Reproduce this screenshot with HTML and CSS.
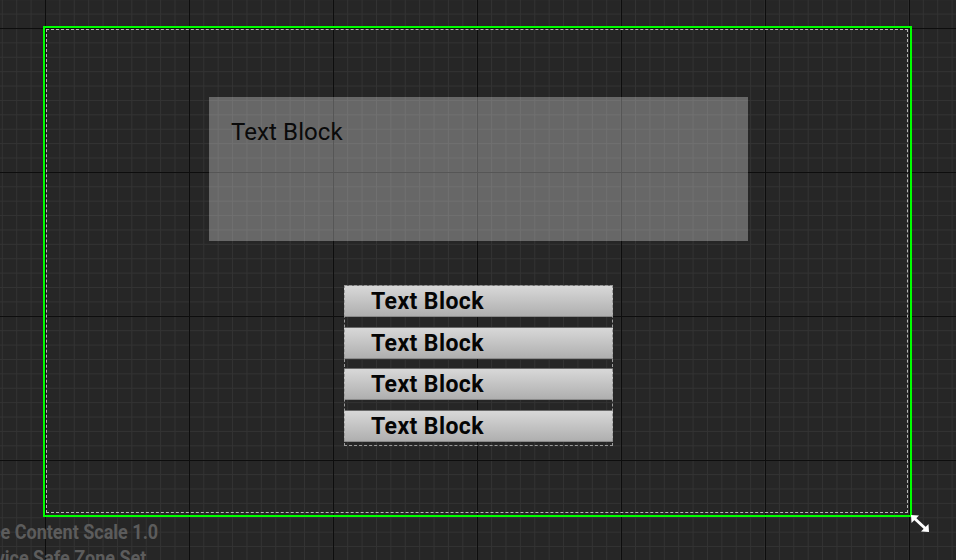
FILE: index.html
```html
<!DOCTYPE html>
<html lang="en">
<head>
    <meta charset="UTF-8">
    <meta name="viewport" content="width=device-width, initial-scale=1.0">
    <title>Widget Designer</title>
    <link rel="stylesheet" href="styles.css">
</head>
<body>
    <div class="screen">
        <div class="safe-zone">
            <div class="text-panel">Text Block</div>
            <div class="button-list">
                <div class="list-button">Text Block</div>
                <div class="list-button">Text Block</div>
                <div class="list-button">Text Block</div>
                <div class="list-button">Text Block</div>
            </div>
        </div>
        <svg class="resize-handle" width="22" height="22" viewBox="0 0 22 22">
            <path d="M3 3 L17 16" stroke="#ffffff" stroke-width="3"/>
            <polygon points="1,1 9,1.5 1.5,9" fill="#ffffff"/>
            <polygon points="19,18 11,17.5 18.5,10" fill="#ffffff"/>
        </svg>
    </div>
    <div class="info">
        <div>Device Content Scale 1.0</div>
        <div class="info-safe">No Device Safe Zone Set</div>
    </div>
</body>
</html>
```

FILE: styles.css
```css
html, body {
    height: 100%;
}
body {
    margin: 0;
    overflow: hidden;
    font-family: Roboto, "Liberation Sans", sans-serif;
    background-color: #262626;
    background-image:
        linear-gradient(90deg, #0d0d0d 1px, transparent 1px),
        linear-gradient(#0d0d0d 1px, transparent 1px),
        linear-gradient(90deg, #333333 1px, transparent 1px),
        linear-gradient(#333333 1px, transparent 1px);
    background-size: 144px 144px, 144px 144px, 14.4px 14.4px, 14.4px 14.4px;
    background-position: 45px 28px, 45px 28px, 45px 28px, 45px 28px;
}
.screen {
    position: relative;
    margin: 26px 0 0 43px;
    width: 865px;
    height: 487px;
    border: 2px solid #00ff00;
}
.safe-zone {
    margin: 1px 0 0 1px;
    width: 862px;
    height: 484px;
    border: 1px dashed #b8b8b8;
    box-sizing: border-box;
}
.text-panel {
    margin: 67px 0 0 162px;
    width: 539px;
    height: 144px;
    box-sizing: border-box;
    padding: 21px 22px;
    background-color: rgba(255, 255, 255, 0.3);
    color: #0a0a0a;
    font-size: 24px;
    letter-spacing: 0.1px;
}
.button-list {
    position: relative;
    display: flex;
    flex-direction: column;
    gap: 9.67px;
    margin: 44px 0 0 297px;
    width: 269px;
    height: 161px;
}
.button-list::after {
    content: "";
    position: absolute;
    inset: 0;
    border: 1px dashed #9a9a9a;
    pointer-events: none;
}
.list-button {
    height: 32px;
    line-height: 31px;
    box-sizing: border-box;
    padding-left: 27px;
    border-top: 1px solid #6a6a6a;
    border-bottom: 1px solid #8a8a8a;
    background: linear-gradient(#d8d8d8, #afafaf);
    color: #050505;
    font-size: 23px;
    font-weight: bold;
    letter-spacing: 0.4px;
}
.resize-handle {
    position: absolute;
    right: -22px;
    bottom: -21px;
}
.info {
    margin: 2px 0 0 -44px;
    color: #5c5c5c;
    font-size: 20px;
    font-weight: bold;
    line-height: 26px;
    transform: scaleX(0.9);
    transform-origin: left top;
    white-space: nowrap;
}
.info-safe {
    margin-left: -10px;
}
```
